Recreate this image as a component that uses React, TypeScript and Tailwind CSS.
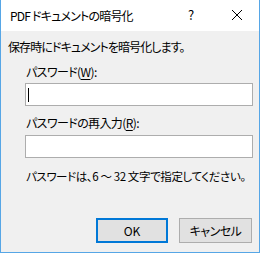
export default function App() {
  return (
    <div className="w-[260px] h-[253px] flex flex-col bg-[#f0f0f0] border-x border-b border-[#56a6e6] text-[12px] leading-[15px] text-black tracking-[-0.6px] font-['Noto_Sans_CJK_JP','Noto_Sans',sans-serif] [font-feature-settings:'palt']">
      {/* タイトルバー */}
      <div className="h-[31px] bg-white flex items-center relative">
        <span className="ml-[9px] tracking-[-0.8px]">PDF ドキュメントの暗号化</span>
        <span className="absolute left-[187px] top-[7px] text-[13px]">?</span>
        <svg className="absolute left-[230px] top-[9px]" width="12" height="12" viewBox="0 0 12 12">
          <path d="M1 1 L11 11 M11 1 L1 11" stroke="#000" strokeWidth="1" />
        </svg>
      </div>

      {/* 本文 */}
      <div className="flex-1 flex flex-col">
        <p className="mt-[8px] ml-[7px] tracking-[-0.9px]">保存時にドキュメントを暗号化します。</p>

        <p className="mt-[10px] ml-[25px]">
          パスワード(<span className="underline underline-offset-2">W</span>):
        </p>
        <div className="mt-[4px] ml-[24px] w-[228px] h-[23px] bg-white border border-[#adadad] flex items-center pl-[2px]">
          <div className="w-px h-[14px] bg-black" />
        </div>

        <p className="mt-[9px] ml-[25px]">
          パスワードの再入力(<span className="underline underline-offset-2">R</span>):
        </p>
        <div className="mt-[5px] ml-[24px] w-[228px] h-[23px] bg-white border border-[#adadad]" />

        <p className="mt-[11px] ml-[25px] whitespace-nowrap text-[11.5px] tracking-[-0.4px]">
          パスワードは、6 ～ 32 文字で指定してください。
        </p>

        <div className="mt-auto mb-[9px] mr-[7px] flex justify-end gap-[11px] tracking-normal">
          <button className="w-[72px] h-[25px] bg-[#e1e1e1] border-2 border-[#0078d7] flex items-center justify-center">
            OK
          </button>
          <button className="w-[73px] h-[25px] bg-[#e1e1e1] border border-[#adadad] flex items-center justify-center tracking-[-0.5px]">
            キャンセル
          </button>
        </div>
      </div>
    </div>
  );
}
